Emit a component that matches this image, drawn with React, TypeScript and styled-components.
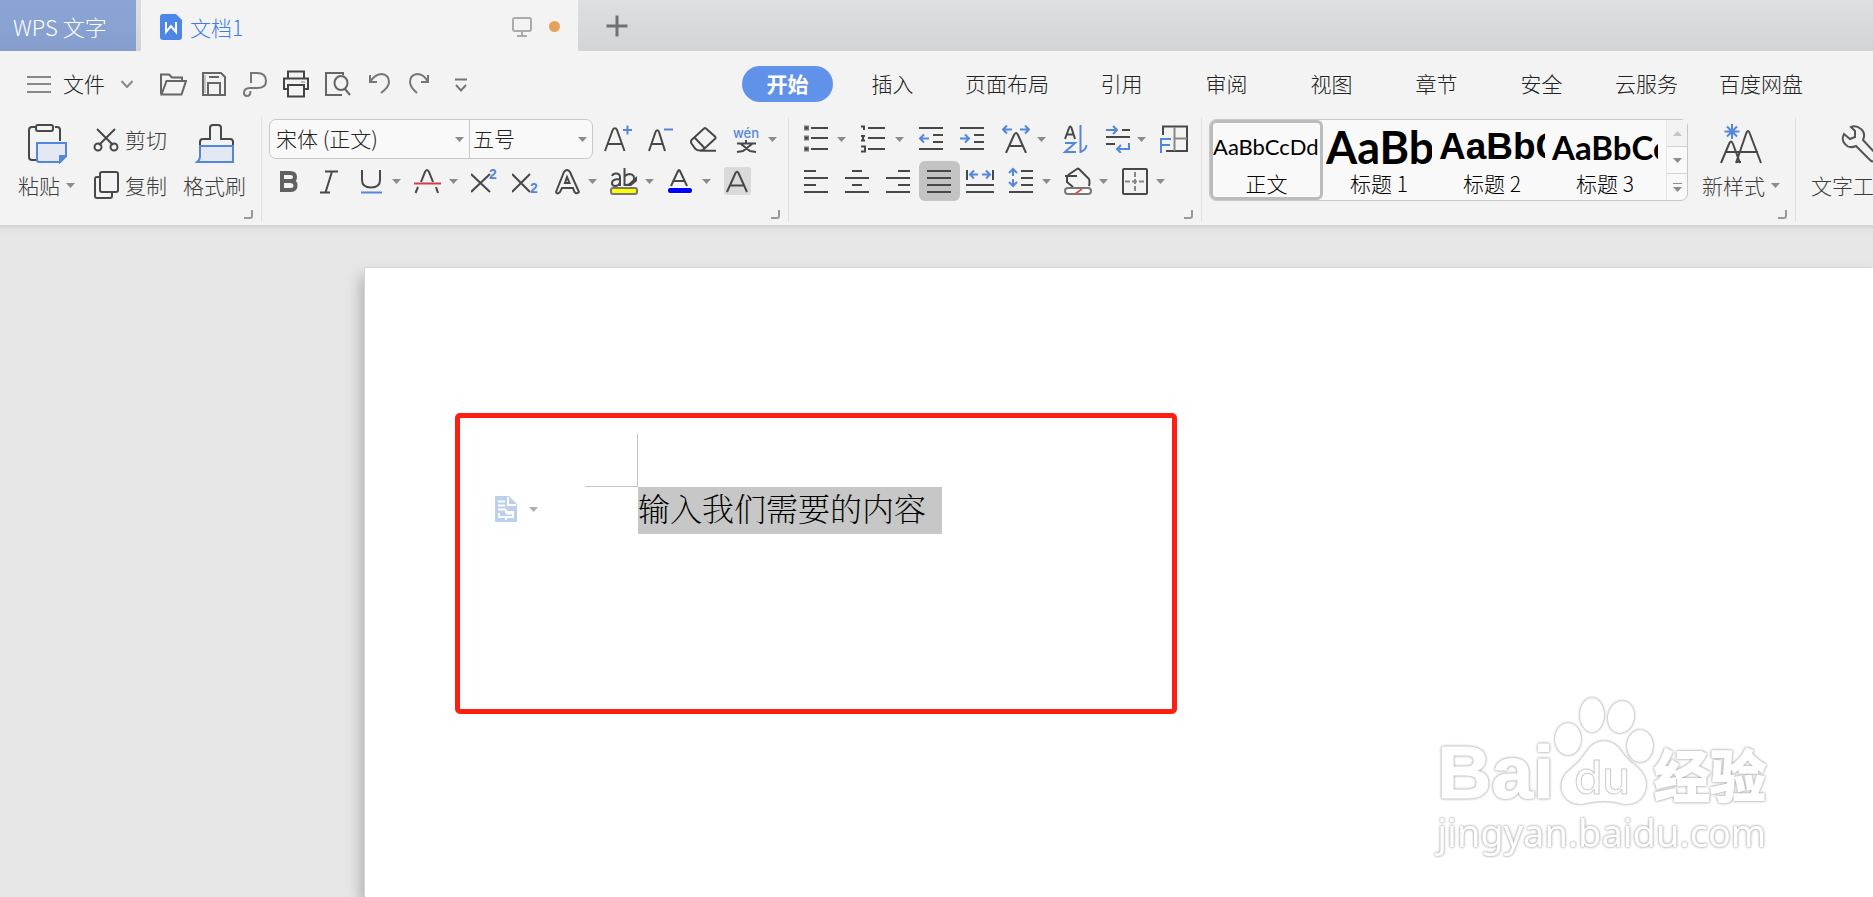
import React from 'react';
import styled, { createGlobalStyle, css } from 'styled-components';

const ink = '#484848';
const blue = '#5287dc';
const sans = '"Noto Sans CJK SC", "Noto Sans", sans-serif';

const GlobalStyle = createGlobalStyle`
  *, *::before, *::after { box-sizing: border-box; }
  body {
    margin: 0;
    background: #e7e7e7;
    color: #222;
    font-family: ${sans};
    font-size: 21px;
    font-weight: 300;
  }
  button, select {
    margin: 0;
    padding: 0;
    border: 0;
    background: none;
    color: inherit;
    font: inherit;
  }
  svg { display: block; flex: none; }
`;

const Window = styled.div`
  display: flex;
  flex-direction: column;
  min-height: 100vh;
  overflow: hidden;
`;

/* Title bar */

const TitleBar = styled.header`
  display: flex;
  height: 51px;
  background: linear-gradient(#dddfe0, #d2d4d5);
`;

const AppTab = styled.button`
  width: 136px;
  margin-right: 5px;
  padding: 0 0 0 13px;
  background: linear-gradient(#8ba5d6, #859ecd);
  color: #fff;
  font-size: 22px;
  text-align: left;
`;

const DocTab = styled.div`
  display: flex;
  align-items: center;
  width: 437px;
  padding: 2px 18px 0 19px;
  background: #f3f3f3;
`;

const DocName = styled.button`
  display: flex;
  align-items: center;
  gap: 8px;
  margin-right: auto;
  color: #3f7de6;
`;

const UnsavedDot = styled.span`
  width: 11px;
  height: 11px;
  margin: 0 0 0 17px;
  border-radius: 50%;
  background: #e5a05c;
`;

const NewTab = styled.button`
  padding: 0 0 0 28px;
`;

/* Menu row */

const MenuRow = styled.nav`
  display: flex;
  align-items: center;
  height: 66px;
  padding-left: 27px;
  background: #f3f3f3;
`;

const FileButton = styled.button`
  display: flex;
  align-items: center;
  gap: 12px;
  margin-right: 20px;
`;

const FileLabel = styled.span`
  margin-right: 4px;
  padding-bottom: 2px;
`;

const Tabs = styled.div`
  display: flex;
  align-items: center;
  margin: 0 50px 0 auto;
`;

const Tab = styled.button<{ $active?: boolean }>`
  min-width: 105px;
  padding: 0 20px 2px;
  line-height: 34px;
  white-space: nowrap;
  ${(p) =>
    p.$active &&
    css`
      min-width: 91px;
      margin: 0 7px;
      border-radius: 18px;
      background: #6092ea;
      color: #fff;
      font-weight: 700;
    `}
`;

/* Ribbon */

const Ribbon = styled.section`
  display: flex;
  height: 108px;
  background: #f3f3f3;
  white-space: nowrap;
`;

const GroupBox = styled.div`
  display: flex;
  flex: none;
  flex-direction: column;
  height: 105px;
  padding-top: 2px;
  border-right: 1px solid #e2e2e2;
`;

const GroupBody = styled.div<{ $start: number; $end: number }>`
  display: flex;
  height: 82px;
  padding: 0 ${(p) => p.$end}px 0 ${(p) => p.$start}px;
`;

const Launcher = styled.button`
  align-self: flex-end;
  margin: 9px 8px 0 0;
`;

const ToolRows = styled.div`
  display: flex;
  flex-direction: column;
  gap: 2px;
`;

const ToolRow = styled.div<{ $gap?: number }>`
  display: flex;
  gap: ${(p) => p.$gap ?? 0}px;
  height: 40px;
`;

const ToolButton = styled.button<{ $split?: boolean; $active?: boolean }>`
  display: flex;
  align-items: center;
  gap: 7px;
  width: ${(p) => (p.$split ? 57 : 41)}px;
  height: 40px;
  padding-left: 6px;
  border-radius: 6px;
  background: ${(p) => (p.$active ? '#c3c3c3' : 'none')};
`;

const BigButton = styled.button`
  display: flex;
  flex-direction: column;
  align-items: center;
  gap: 8px;
  height: 82px;
  padding-top: 5px;
  color: #3c3c3c;
`;

const BigLabel = styled.span`
  display: flex;
  align-items: center;
  gap: 6px;
  line-height: 26px;
`;

const ClipboardTools = styled.div`
  display: flex;
  gap: 16px;
`;

const SmallStack = styled.div`
  display: flex;
  flex-direction: column;
  gap: 14px;
  padding-top: 4px;
`;

const SmallButton = styled.button`
  display: flex;
  align-items: center;
  gap: 6px;
  color: #3c3c3c;
  line-height: 32px;
`;

const FontBox = styled.div`
  display: flex;
  width: 324px;
  height: 40px;
  margin-right: 3px;
  border: 1px solid #c8c8c8;
  border-radius: 7px;
  background: #f9f9f9;
`;

const Field = styled.label<{ $wide?: boolean }>`
  display: grid;
  flex: ${(p) => (p.$wide ? '0 0 200px' : '1')};
  align-items: center;
  border-right: ${(p) => (p.$wide ? '1px solid #c8c8c8' : '0')};
  & > * { grid-area: 1 / 1; }
  & > svg { justify-self: end; margin-right: 5px; pointer-events: none; }
`;

const Select = styled.select<{ $inset: number }>`
  width: 100%;
  height: 38px;
  padding: 0 0 2px ${(p) => p.$inset}px;
  appearance: none;
`;

/* Style gallery */

const Gallery = styled.div`
  display: flex;
  height: 82px;
  margin-right: 14px;
  border: 1px solid #c8c8c8;
  border-radius: 7px;
  background: #f9f9f9;
  color: #000;
`;

const StyleItem = styled.button<{ $selected?: boolean }>`
  display: flex;
  flex-direction: column;
  width: 113px;
  padding: ${(p) => (p.$selected ? '0' : '3px 4px 3px 3px')};
  border: ${(p) => (p.$selected ? '3px solid #bcbcbc' : '0')};
  border-radius: 6px;
`;

const Sample = styled.span<{ $size: number; $weight: number; $face: string }>`
  width: 100%;
  height: 48px;
  overflow: hidden;
  font: ${(p) => p.$weight} ${(p) => p.$size}px/48px ${(p) => p.$face};
  text-align: left;
`;

const StyleName = styled.span`
  width: 100%;
  line-height: 24px;
  text-align: center;
`;

const Scroller = styled.div`
  display: flex;
  flex-direction: column;
  width: 21px;
  margin-left: 4px;
  border-left: 1px solid #e6e6e6;
`;

const ScrollButton = styled.button<{ $muted?: boolean }>`
  display: flex;
  flex: 1;
  align-items: center;
  justify-content: center;
  background: ${(p) => (p.$muted ? '#f3f3f3' : 'none')};
  & + & { border-top: 1px solid #d4d4d4; }
`;

/* Document */

const Canvas = styled.main`
  position: relative;
  display: flex;
  flex: 1;
  padding: 43px 0 0 365px;
  overflow: hidden;
  background: linear-gradient(#d0d0d0, #e2e2e2 4px, #e7e7e7 12px);
`;

const Sheet = styled.article`
  flex: 1;
  padding: 145px 0 0 90px;
  background: #fff;
  box-shadow: -1px -1px 0 #d6d6d6, -4px 8px 14px rgba(0, 0, 0, 0.25);
`;

const Highlight = styled.section`
  display: grid;
  grid-template-columns: 90px 53px auto;
  grid-template-rows: 53px 47px;
  width: 722px;
  height: 301px;
  padding: 16px 0 0 35px;
  border: 5px solid #ff1f12;
  border-radius: 5px;
`;

const MarginCorner = styled.span`
  grid-area: 1 / 2;
  border: solid #c4c4c4;
  border-width: 0 1px 1px 0;
`;

const PasteOptions = styled.button`
  display: flex;
  grid-area: 2 / 1;
  align-items: center;
  gap: 12px;
  padding-bottom: 3px;
`;

const SelectedText = styled.p`
  grid-area: 2 / 3;
  justify-self: start;
  margin: 0;
  padding: 0 16px 6px 0;
  background: #c7c7c7;
  color: #000;
  font-family: "Noto Serif CJK SC", SimSun, ${sans};
  font-size: 32px;
  font-weight: 200;
  line-height: 41px;
`;

const Watermark = styled.div`
  position: absolute;
  right: 102px;
  bottom: 38px;
  color: #fff;
  filter: drop-shadow(0 0 1px #aaa) drop-shadow(0 0 1px #ccc);
`;

const WatermarkLogo = styled.div`
  display: flex;
  align-items: flex-end;
  justify-content: flex-end;
  height: 112px;
  padding-right: 5px;
`;

const WatermarkLatin = styled.span`
  font: 700 75px/74px "Liberation Sans", sans-serif;
  -webkit-text-stroke: 1px #fff;
`;

const WatermarkHan = styled.span`
  font: 700 56px/72px ${sans};
  -webkit-text-stroke: 2px #fff;
`;

const WatermarkUrl = styled.div`
  font: 400 38px/46px "Noto Sans", sans-serif;
  padding-bottom: 4px;
`;

/* Icons */

type IconProps = {
  children: React.ReactNode;
  w?: number;
  h?: number;
  color?: string;
  sw?: number;
};

const Icon = ({ children, w = 28, h = 28, color = ink, sw = 2 }: IconProps) => (
  <svg width={w} height={h} viewBox={`0 0 ${w} ${h}`} fill="none" stroke={color} strokeWidth={sw} aria-hidden="true">
    {children}
  </svg>
);

const Caret = ({ color = '#8c8c8c' }: { color?: string }) => (
  <svg width="9" height="5" viewBox="0 0 9 5" aria-hidden="true">
    <path d="M0 0h9L4.5 5z" fill={color} />
  </svg>
);

const icons = {
  open: (
    <Icon color="#666">
      <path d="M2 24V4.500H10L13 7.500H23V11M2.500 24.500L7.500 11H27L22.500 24.500z" />
    </Icon>
  ),
  save: (
    <Icon color="#666">
      <path d="M3 3H21L25 7V25H3zM8 25V13H20V25M9 7H19" />
      <path d="M5 5V23" stroke="#999" strokeWidth="1" />
    </Icon>
  ),
  pdf: (
    <Icon color="#777">
      <path d="M10 13V3H16Q25 3 25 11Q25 18 16 18H9Q3 18 3 23Q3 26 6 26Q9.500 26 9.500 21" />
    </Icon>
  ),
  print: (
    <Icon color="#444">
      <path d="M6 8V1.500H22V8M6 19H2V8.500H26V19H22M6 15H22V26.500H6z" />
      <path d="M19 12H23" stroke="#888" strokeWidth="1" />
    </Icon>
  ),
  preview: (
    <Icon color="#666">
      <path d="M19 25H3V3H20V5" />
      <ellipse cx="18" cy="13" rx="6.500" ry="7" />
      <path d="M22 19L27 25" />
    </Icon>
  ),
  undo: (
    <Icon color="#777">
      <path d="M6 5V12H13M6 12Q11 4 18 4Q25 5 25 12Q25 17 17 23" />
    </Icon>
  ),
  redo: (
    <Icon color="#777">
      <path d="M23 5V12H16M23 12Q19 4 12 4Q5 5 5 12Q5 17 12 23" />
    </Icon>
  ),
  customize: (
    <Icon color="#777">
      <path d="M9 9.500H21M10 15L15 20.500L20 15" />
    </Icon>
  ),
  grow: (
    <Icon>
      <path d="M1 26L8.700 5Q9.200 3.200 10.800 3.200Q12.400 3.200 13 5L20.500 26M4 19H17.500" />
      <path d="M19 5H28M23.500 0.500V9.500" stroke={blue} />
    </Icon>
  ),
  shrink: (
    <Icon>
      <path d="M2 26L8.500 7Q9 5.200 10.300 5.200Q11.600 5.200 12 7L18 26M4.500 19H15.500" />
      <path d="M17 4.500H26" stroke={blue} />
    </Icon>
  ),
  eraser: (
    <Icon>
      <path d="M1.500 15L14 3.500Q15 2.700 16 3.500L25 11.500Q26 12.700 25 13.700L14 24Q12.500 25.500 10 25.500Q7 25.500 5.500 24L1.500 18.500Q0.500 16.500 1.500 15zM4.500 12.500L14.500 23M10 25.700H26" />
    </Icon>
  ),
  pinyin: (
    <Icon>
      <text x="13" y="13" textAnchor="middle" fill={blue} stroke="none" fontFamily="Inter" fontSize="13" fontWeight="500">wén</text>
      <path d="M13 15V18M4 18.500H23M8 19L17 26L23 27M19 19L10 26L4 27" />
    </Icon>
  ),
  bold: (
    <Icon color="#606060" sw={4}>
      <path d="M5 6H15Q20 6 20 10Q20 14 15 14H7V6V23H16Q20.500 23 20.500 18.500Q20.500 14 15 14" />
    </Icon>
  ),
  italic: (
    <Icon>
      <path d="M9 4.500H22M4 25.500H14M16 4.500L9.500 25.500" />
    </Icon>
  ),
  underline: (
    <Icon>
      <path d="M5 3V13Q5 20.500 14 20.500Q23 20.500 23 13V3" />
      <path d="M4 25.500H25" stroke={blue} />
    </Icon>
  ),
  strike: (
    <Icon>
      <path d="M7 15L11 5Q13 1 15 5L19 15M4 20L1.500 26M22 20L24 26" />
      <path d="M0 16.500H27" stroke="#d23c46" />
    </Icon>
  ),
  superscript: (
    <Icon>
      <path d="M0 7L19 25M19 7L0 25" />
      <text x="18" y="12" fill={blue} stroke="none" fontFamily="Liberation Sans" fontSize="14" fontWeight="700">2</text>
    </Icon>
  ),
  subscript: (
    <Icon>
      <path d="M0 7L18 25M18 7L0 25" />
      <text x="18" y="26" fill={blue} stroke="none" fontFamily="Liberation Sans" fontSize="14" fontWeight="700">2</text>
    </Icon>
  ),
  outline: (
    <Icon sw={2}>
      <path d="M3 25L11 5Q14 1 17 5L26 25Q24 27.500 21.500 25L20 21H9L7 25Q4 28 3 25zM14 10L12 16H16.500z" />
    </Icon>
  ),
  marker: (
    <Icon>
      <path d="M2 9Q3 6.500 6 6.500Q10 6.500 10 10V19M10 12Q2 12 2 16Q2 19 5 19Q9 19 10 15M14.500 1V19M15 9Q17 7 20 7Q25 8 24 13Q23 18 15 18" />
      <path d="M16 19L27 9V14L21 19z" fill={ink} stroke="none" />
      <rect x="1" y="21" width="26" height="6" rx="2" fill="#ff0" stroke="#777" />
    </Icon>
  ),
  fontColor: (
    <Icon>
      <path d="M4 19L11 4Q12 2 13 4L20 19M6.500 14H17.500" />
      <rect x="0" y="20" width="26" height="7" rx="3" fill="#fff" stroke="none" />
      <rect x="1" y="21" width="24" height="5" rx="2" fill="#00f" stroke="none" />
    </Icon>
  ),
  shade: (
    <Icon>
      <rect width="27" height="28" rx="2" fill="#dadada" stroke="none" />
      <path d="M3 25L11.500 6Q13 3.500 14.500 6L23 25M6 18.500H20" />
    </Icon>
  ),
  bullets: (
    <Icon>
      <path d="M9 3H26M9 13H26M9 24H26" />
      <path d="M2 3H7M2 13H7M2 24H7" strokeWidth="5" stroke="#777" />
      <path d="M3.500 3H5.500M3.500 13H5.500M3.500 24H5.500" stroke="#333" />
    </Icon>
  ),
  numbers: (
    <Icon>
      <path d="M8 3H25M8 13H25M8 24H25" />
      <path d="M1 1.500H4V5M1 11H5M1 15.500H5M3 11V15M1 21.500H5V26.500H1" />
    </Icon>
  ),
  outdent: (
    <Icon>
      <path d="M1 3H25M15 10H25M15 17H25M1 24H25" />
      <path d="M11 13.500H2M6 9.500L2 13.500L6 17.500" stroke={blue} />
    </Icon>
  ),
  indent: (
    <Icon>
      <path d="M0 3H24M14 10H24M14 17H24M0 24H24" />
      <path d="M0 13.500H9M5 9.500L9 13.500L5 17.500" stroke={blue} />
    </Icon>
  ),
  charScale: (
    <Icon>
      <path d="M4 28L12 10Q14 6 16 10L24 28M8 21H20" />
      <path d="M10 4.500H1M5 0.500L1 4.500L5 8.500M18 4.500H27M23 0.500L27 4.500L23 8.500" stroke={blue} />
    </Icon>
  ),
  sort: (
    <Icon>
      <path d="M5 14L9 3Q10 0 11.500 3L15 14M6.500 9.500H14" />
      <path d="M5 18H15L5 27H16M20.500 0V27Q26 25 26.500 20" stroke={blue} />
    </Icon>
  ),
  marks: (
    <Icon>
      <path d="M20 5H28M4 12H28M4 19H13" />
      <path d="M4 5H15M11 1L15 5L11 9M27 18V24H15M19 20L15 24L19 28" stroke={blue} />
    </Icon>
  ),
  tableFrame: (
    <Icon>
      <path d="M3 10V1.500H27V26H6" />
      <path d="M14.500 2V26M14 13.500H27" stroke="#888" />
      <path d="M1 28V14H11M1 20H10" stroke={blue} />
    </Icon>
  ),
  left: <Icon><path d="M2 4H14M2 11H26M2 18H14M2 25H26" /></Icon>,
  center: <Icon><path d="M9 4H19M2 11H26M9 18H19M2 25H26" /></Icon>,
  right: <Icon><path d="M14 4H26M2 11H26M14 18H26M2 25H26" /></Icon>,
  justify: <Icon><path d="M2 4H26M2 11H26M2 18H26M2 25H26" /></Icon>,
  distribute: (
    <Icon>
      <path d="M1 3V13M27 3V13M0 18H28M0 25H28" />
      <path d="M12 7.500H4M8 3.500L4 7.500L8 11.500M16 7.500H24M20 3.500L24 7.500L20 11.500" stroke={blue} />
    </Icon>
  ),
  lineSpacing: (
    <Icon>
      <path d="M14 4H26M14 11H26M14 18H26M2 25H26" />
      <path d="M6 1.500V9M2 6L6 2L10 6M6 12V19M2 15L6 19L10 15" stroke={blue} />
    </Icon>
  ),
  fill: (
    <Icon>
      <path d="M1 9H13M4 8L13 2Q14.500 1 16 3L25 12Q26 15 25 19M3 10L3 15L9 20" />
      <rect x="1" y="21" width="26" height="6" rx="3" fill="#fff" stroke="#777" />
      <path d="M11 27L18 22" stroke="#e05050" />
    </Icon>
  ),
  borders: (
    <Icon>
      <rect x="2" y="2" width="24" height="25" rx="1" />
      <path d="M14 5V24M4 14.500H24" stroke="#888" strokeDasharray="5 2" />
    </Icon>
  ),
};

type IconName = keyof typeof icons;

const Tool = ({ icon, label, split, active }: { icon: IconName; label: string; split?: boolean; active?: boolean }) => (
  <ToolButton type="button" aria-label={label} $split={split} $active={active}>
    {icons[icon]}
    {split && <Caret />}
  </ToolButton>
);

type GroupProps = { start: number; end: number; name: string; children: React.ReactNode };

const Group = ({ start, end, name, children }: GroupProps) => (
  <GroupBox role="group" aria-label={name}>
    <GroupBody $start={start} $end={end}>{children}</GroupBody>
    <Launcher type="button" aria-label={`${name}设置`}>
      <Icon w={9} h={9} color="#999"><path d="M8 0V6Q8 8 6 8H0" /></Icon>
    </Launcher>
  </GroupBox>
);

const quickTools: [IconName, string][] = [
  ['open', '打开'], ['save', '保存'], ['pdf', '输出为PDF'], ['print', '打印'],
  ['preview', '打印预览'], ['undo', '撤销'], ['redo', '恢复'], ['customize', '自定义'],
];

const tabs = ['开始', '插入', '页面布局', '引用', '审阅', '视图', '章节', '安全', '云服务', '百度网盘'];

const styleItems = [
  { name: '正文', text: 'AaBbCcDd', size: 22, weight: 400, face: 'Lato, sans-serif' },
  { name: '标题 1', text: 'AaBb', size: 45, weight: 700, face: 'Lato, sans-serif' },
  { name: '标题 2', text: 'AaBbC', size: 37, weight: 700, face: '"Liberation Sans", sans-serif' },
  { name: '标题 3', text: 'AaBbCc', size: 33, weight: 700, face: 'Lato, sans-serif' },
];

export default function App() {
  return (
    <Window>
      <GlobalStyle />
      <TitleBar>
        <AppTab type="button">WPS 文字</AppTab>
        <DocTab>
          <DocName type="button">
            <svg width="22" height="26" viewBox="0 0 22 26" aria-hidden="true">
              <path d="M3 0H16L22 6V23Q22 26 19 26H3Q0 26 0 23V3Q0 0 3 0z" fill="#4c86e8" />
              <path d="M6 8V18L11 12L16 18V8" fill="none" stroke="#fff" strokeWidth="2" />
            </svg>
            文档1
          </DocName>
          <Icon w={20} h={20} color="#aaa">
            <rect x="1" y="1" width="18" height="13" rx="2" />
            <path d="M10 14V19M5 19H15" />
          </Icon>
          <UnsavedDot />
        </DocTab>
        <NewTab type="button" aria-label="新建">
          <Icon w={22} h={22} color="#707272" sw={3}><path d="M0.500 11H21.500M11 0.500V21.500" /></Icon>
        </NewTab>
      </TitleBar>

      <MenuRow>
        <FileButton type="button">
          <Icon w={24} h={18} color="#888"><path d="M0 2H24M0 9H24M0 17H24" /></Icon>
          <FileLabel>文件</FileLabel>
          <Icon w={12} h={8} color="#888"><path d="M0.500 1L6 7L11.500 1" /></Icon>
        </FileButton>
        {quickTools.map(([icon, label]) => <Tool key={icon} icon={icon} label={label} />)}
        <Tabs role="tablist">
          {tabs.map((name, i) => (
            <Tab key={name} type="button" role="tab" aria-selected={i === 0} $active={i === 0}>{name}</Tab>
          ))}
        </Tabs>
      </MenuRow>

      <Ribbon>
        <Group name="剪贴板" start={18} end={15}>
          <ClipboardTools>
            <BigButton type="button">
              <Icon w={40} h={40}>
                <path d="M10 3H5Q2 3 2 6V33Q2 36 5 36H10M28 3H30Q33 3 33 6V17" />
                <rect x="9" y="1" width="17" height="6" rx="2" />
                <path d="M10 19H39V32L33 38H12Q10 38 10 36z" fill="#e3e8f2" stroke={blue} />
                <path d="M39 32H33V38z" fill={blue} stroke={blue} />
              </Icon>
              <BigLabel>粘贴<Caret /></BigLabel>
            </BigButton>
            <SmallStack>
              <SmallButton type="button">
                <Icon>
                  <path d="M6 4L22 20M24 4L8 20" />
                  <circle cx="7" cy="22" r="3.500" />
                  <circle cx="23" cy="22" r="3.500" />
                </Icon>
                剪切
              </SmallButton>
              <SmallButton type="button">
                <Icon>
                  <rect x="9" y="1" width="18" height="20" rx="2" />
                  <path d="M9 6H6Q4 6 4 8V25Q4 27 6 27H19Q21 27 21 25V21" />
                </Icon>
                复制
              </SmallButton>
            </SmallStack>
            <BigButton type="button">
              <Icon w={40} h={40}>
                <path d="M5 22V18Q5 15 8 15H15V4Q15 1 18 1H23Q26 1 26 4V15H35Q38 15 38 18V22" />
                <path d="M5 22H38V38H2Q5 36 5 32z" fill="#e3e8f2" stroke={blue} />
              </Icon>
              <BigLabel>格式刷</BigLabel>
            </BigButton>
          </ClipboardTools>
        </Group>

        <Group name="字体" start={7} end={4}>
          <ToolRows>
            <ToolRow $gap={2}>
              <FontBox>
                <Field $wide>
                  <Select aria-label="字体" $inset={6}><option>宋体 (正文)</option></Select>
                  <Caret />
                </Field>
                <Field>
                  <Select aria-label="字号" $inset={3}><option>五号</option></Select>
                  <Caret />
                </Field>
              </FontBox>
              <Tool icon="grow" label="增大字号" />
              <Tool icon="shrink" label="减小字号" />
              <Tool icon="eraser" label="清除格式" />
              <Tool icon="pinyin" label="拼音指南" split />
            </ToolRow>
            <ToolRow>
              <Tool icon="bold" label="加粗" />
              <Tool icon="italic" label="倾斜" />
              <Tool icon="underline" label="下划线" split />
              <Tool icon="strike" label="删除线" split />
              <Tool icon="superscript" label="上标" />
              <Tool icon="subscript" label="下标" />
              <Tool icon="outline" label="文字效果" split />
              <Tool icon="marker" label="突出显示" split />
              <Tool icon="fontColor" label="字体颜色" split />
              <Tool icon="shade" label="字符底纹" />
            </ToolRow>
          </ToolRows>
        </Group>

        <Group name="段落" start={7} end={6}>
          <ToolRows>
            <ToolRow $gap={1}>
              <Tool icon="bullets" label="项目符号" split />
              <Tool icon="numbers" label="编号" split />
              <Tool icon="outdent" label="减少缩进量" />
              <Tool icon="indent" label="增加缩进量" />
              <Tool icon="charScale" label="中文版式" split />
              <Tool icon="sort" label="排序" />
              <Tool icon="marks" label="显示编辑标记" split />
              <Tool icon="tableFrame" label="制表位" />
            </ToolRow>
            <ToolRow>
              <Tool icon="left" label="左对齐" />
              <Tool icon="center" label="居中对齐" />
              <Tool icon="right" label="右对齐" />
              <Tool icon="justify" label="两端对齐" active />
              <Tool icon="distribute" label="分散对齐" />
              <Tool icon="lineSpacing" label="行距" split />
              <Tool icon="fill" label="底纹颜色" split />
              <Tool icon="borders" label="边框" split />
            </ToolRow>
          </ToolRows>
        </Group>

        <Group name="样式" start={7} end={15}>
          <Gallery>
            {styleItems.map((s, i) => (
              <StyleItem key={s.name} type="button" $selected={i === 0}>
                <Sample $size={s.size} $weight={s.weight} $face={s.face}>{s.text}</Sample>
                <StyleName>{s.name}</StyleName>
              </StyleItem>
            ))}
            <Scroller>
              <ScrollButton type="button" aria-label="上一行" $muted>
                <Icon w={9} h={5} color="none"><path d="M0 5H9L4.500 0z" fill="#c4c4c4" /></Icon>
              </ScrollButton>
              <ScrollButton type="button" aria-label="下一行"><Caret /></ScrollButton>
              <ScrollButton type="button" aria-label="更多样式">
                <Icon w={9} h={9} color="#8c8c8c" sw={1}>
                  <path d="M0 0.500H9" />
                  <path d="M0 4H9L4.500 9z" fill="#8c8c8c" stroke="none" />
                </Icon>
              </ScrollButton>
            </Scroller>
          </Gallery>
          <BigButton type="button">
            <Icon w={44} h={40}>
              <path d="M2 39L10 20Q12 15 14 20L21 39M17 39L27 10Q29 4 31 10L42 39M6 28H39M17 38H22" />
              <path d="M13 0V15M5.500 7.500H20.500M8 2.500L18 12.500M18 2.500L8 12.500" stroke={blue} />
            </Icon>
            <BigLabel>新样式<Caret /></BigLabel>
          </BigButton>
        </Group>

        <Group name="编辑" start={15} end={15}>
          <BigButton type="button">
            <Icon w={40} h={40} color="#555">
              <path d="M10 3L14 7V13L9 15L3 10Q0 16 4 20Q8 25 15 22L29 36Q32 39 35 36Q38 33 35 30L22 16Q25 9 20 5Q15 1 10 3z" />
            </Icon>
            <BigLabel>文字工具<Caret /></BigLabel>
          </BigButton>
        </Group>
      </Ribbon>

      <Canvas>
        <Sheet>
          <Highlight>
            <PasteOptions type="button" aria-label="粘贴选项">
              <svg width="22" height="26" viewBox="0 0 22 26" aria-hidden="true">
                <path d="M0 0H14L22 8V26H0z" fill="#bccfeb" />
                <path d="M13 1V9H21M3 5.500H10M3 9.500H10M3 13.500H10L12 16H19M11 14.500V17M4 17V21H18V17.500H11M11 21V24" fill="none" stroke="#fff" strokeWidth="2" />
              </svg>
              <Caret color="#b0b0b0" />
            </PasteOptions>
            <MarginCorner />
            <SelectedText>输入我们需要的内容</SelectedText>
          </Highlight>
        </Sheet>
        <Watermark>
          <WatermarkLogo>
            <WatermarkLatin>Bai</WatermarkLatin>
            <svg width="100" height="112" viewBox="0 0 100 112" fill="#fff" aria-hidden="true">
              <ellipse cx="14" cy="42" rx="13" ry="16" />
              <ellipse cx="38" cy="18" rx="12" ry="17" />
              <ellipse cx="67" cy="20" rx="13" ry="16" transform="rotate(12 67 20)" />
              <ellipse cx="86" cy="49" rx="13" ry="16" />
              <path d="M50 44Q60 44 67 54Q73 63 83 70Q95 81 91 94Q86 108 70 107Q60 104 50 104Q40 104 28 107Q12 107 8 94Q5 81 17 72Q26 65 33 54Q40 44 50 44z" />
              <text x="48" y="97" textAnchor="middle" fontFamily="Inter" fontSize="46" fontWeight="500" stroke="#ccc" strokeWidth="1">du</text>
            </svg>
            <WatermarkHan>经验</WatermarkHan>
          </WatermarkLogo>
          <WatermarkUrl>jingyan.baidu.com</WatermarkUrl>
        </Watermark>
      </Canvas>
    </Window>
  );
}
